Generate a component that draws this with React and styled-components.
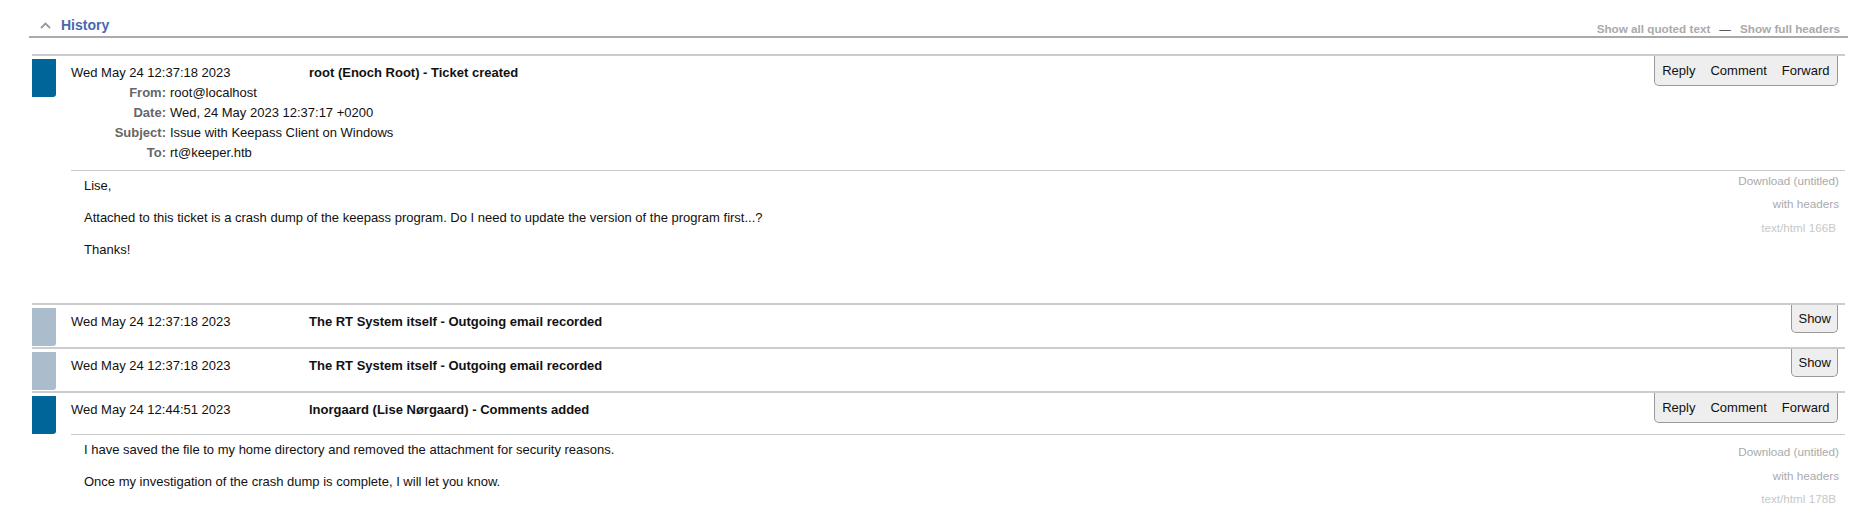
import React from 'react';
import styled, { createGlobalStyle } from 'styled-components';

const Global = createGlobalStyle`
  html, body { margin: 0; padding: 0; background: #fff; }
  body {
    font-family: "Liberation Sans", Arial, sans-serif;
    font-size: 13px;
    color: #111;
  }
`;

const TitleBox = styled.section`
  margin: 0 23px 0 29px;
`;

const TitleBar = styled.div`
  height: 36px;
  border-bottom: 2px solid #aaa;
  display: flex;
  align-items: flex-end;
  justify-content: space-between;
`;

const TitleLeft = styled.div`
  display: flex;
  align-items: center;
  gap: 10px;
  padding: 0 0 3px 11px;
`;

const Title = styled.span`
  font-size: 14px;
  line-height: 16px;
  font-weight: bold;
  color: #4868b0;
`;

const TitleLinks = styled.div`
  display: flex;
  align-items: center;
  padding: 0 8px 1px 0;
  font-size: 11.7px;
  line-height: 13px;
  font-weight: bold;
  color: #aaa;
`;

const Dash = styled.span`
  margin: 0 9px;
  font-weight: normal;
  color: #333;
`;

const List = styled.div`
  padding: 16px 3px 0;
`;

const Transaction = styled.div`
  border-top: 2px solid #ccc;
`;

const TxHead = styled.div`
  display: flex;
  align-items: flex-start;
  min-height: ${(p) => (p.$collapsed ? '42px' : '0')};
`;

const Tab = styled.div`
  flex-shrink: 0;
  width: 24px;
  height: 38px;
  margin-top: 3px;
  background: ${(p) => (p.$muted ? '#abbccc' : '#00669a')};
  border-bottom-right-radius: 3px;
`;

const Meta = styled.div`
  flex: 1;
  margin-left: 15px;
  padding: 7px 0;
`;

const Summary = styled.div`
  display: flex;
  line-height: 20px;
`;

const DateCol = styled.span`
  width: 238px;
  flex-shrink: 0;
`;

const Subject = styled.span`
  font-weight: bold;
`;

const HeaderGrid = styled.div`
  display: grid;
  grid-template-columns: 95px auto;
  column-gap: 4px;
  justify-content: start;
  line-height: 20px;
`;

const Label = styled.span`
  text-align: right;
  font-weight: bold;
  color: #666;
`;

const Actions = styled.div`
  display: flex;
  flex-shrink: 0;
  margin-right: 7px;
  background: #eee;
  border: 1px solid #999;
  border-top: none;
  border-radius: 0 0 5px 5px;
`;

const ActionLink = styled.span`
  padding: ${(p) => (p.$compact ? '5px 6px' : '6px 7.5px')};
  line-height: 17px;
  color: #111;
`;

const Body = styled.div`
  margin-left: 39px;
  border-top: 1px solid #ccc;
  display: flex;
  align-items: flex-start;
`;

const Content = styled.div`
  flex: 1;
  padding: 7px 13px 29px;
  line-height: 16px;
`;

const Para = styled.p`
  margin: 0 0 16px;
`;

const Attachments = styled.div`
  display: flex;
  flex-direction: column;
  align-items: flex-end;
  gap: 9.5px;
  padding: ${(p) => p.$top}px 6px 0 0;
  font-size: 11.7px;
  line-height: 14px;
`;

const AttachLink = styled.span`
  color: #aaa;
`;

const AttachInfo = styled.span`
  color: #c8c8c8;
  padding-right: 3px;
`;

const Chevron = () => (
  <svg width="11" height="7" viewBox="0 0 11 7">
    <polyline points="1,6 5.5,1.5 10,6" fill="none" stroke="#999" strokeWidth="1.8" />
  </svg>
);

const transactions = [
  {
    date: 'Wed May 24 12:37:18 2023',
    subject: 'root (Enoch Root) - Ticket created',
    headers: [
      ['From:', 'root@localhost'],
      ['Date:', 'Wed, 24 May 2023 12:37:17 +0200'],
      ['Subject:', 'Issue with Keepass Client on Windows'],
      ['To:', 'rt@keeper.htb'],
    ],
    body: [
      'Lise,',
      'Attached to this ticket is a crash dump of the keepass program. Do I need to update the version of the program first...?',
      'Thanks!',
    ],
    size: '166B',
    attachTop: 2.5,
  },
  {
    date: 'Wed May 24 12:37:18 2023',
    subject: 'The RT System itself - Outgoing email recorded',
    collapsed: true,
  },
  {
    date: 'Wed May 24 12:37:18 2023',
    subject: 'The RT System itself - Outgoing email recorded',
    collapsed: true,
  },
  {
    date: 'Wed May 24 12:44:51 2023',
    subject: 'lnorgaard (Lise Nørgaard) - Comments added',
    headers: [],
    body: [
      'I have saved the file to my home directory and removed the attachment for security reasons.',
      'Once my investigation of the crash dump is complete, I will let you know.',
    ],
    size: '178B',
    attachTop: 10,
  },
];

export default function App() {
  return (
    <>
      <Global />
      <TitleBox>
        <TitleBar>
          <TitleLeft>
            <Chevron />
            <Title>History</Title>
          </TitleLeft>
          <TitleLinks>
            <span>Show all quoted text</span>
            <Dash>—</Dash>
            <span>Show full headers</span>
          </TitleLinks>
        </TitleBar>
        <List>
          {transactions.map((tx, i) => (
            <Transaction key={i}>
              <TxHead $collapsed={tx.collapsed}>
                <Tab $muted={tx.collapsed} />
                <Meta>
                  <Summary>
                    <DateCol>{tx.date}</DateCol>
                    <Subject>{tx.subject}</Subject>
                  </Summary>
                  {tx.headers && tx.headers.length > 0 && (
                    <HeaderGrid>
                      {tx.headers.map(([k, v]) => (
                        <React.Fragment key={k}>
                          <Label>{k}</Label>
                          <span>{v}</span>
                        </React.Fragment>
                      ))}
                    </HeaderGrid>
                  )}
                </Meta>
                <Actions>
                  {tx.collapsed ? (
                    <ActionLink $compact>Show</ActionLink>
                  ) : (
                    <>
                      <ActionLink>Reply</ActionLink>
                      <ActionLink>Comment</ActionLink>
                      <ActionLink>Forward</ActionLink>
                    </>
                  )}
                </Actions>
              </TxHead>
              {!tx.collapsed && (
                <Body>
                  <Content>
                    {tx.body.map((p, j) => (
                      <Para key={j}>{p}</Para>
                    ))}
                  </Content>
                  <Attachments $top={tx.attachTop}>
                    <AttachLink>Download (untitled)</AttachLink>
                    <AttachLink>with headers</AttachLink>
                    <AttachInfo>text/html {tx.size}</AttachInfo>
                  </Attachments>
                </Body>
              )}
            </Transaction>
          ))}
        </List>
      </TitleBox>
    </>
  );
}
